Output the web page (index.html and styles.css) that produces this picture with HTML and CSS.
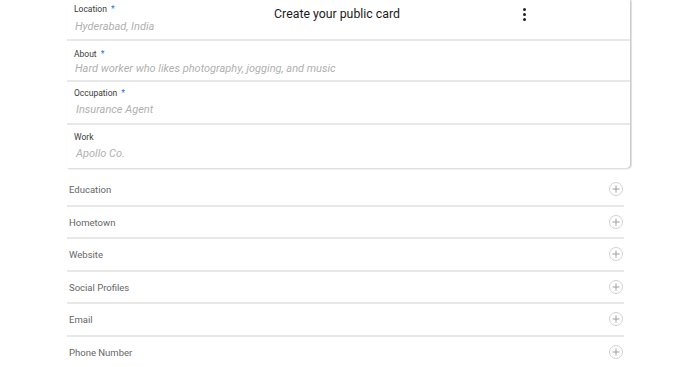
FILE: index.html
```html
<!DOCTYPE html>
<html>
<head>
<meta charset="utf-8">
<link rel="stylesheet" href="styles.css">
</head>
<body>
<div class="page">
  <div class="header">
    <span class="title">Create your public card</span>
    <span class="kebab"><i></i><i></i><i></i></span>
  </div>
  <div class="card">
    <div class="field f1">
      <div class="label">Location <span class="req">*</span></div>
      <div class="value">Hyderabad, India</div>
    </div>
    <div class="field f2">
      <div class="label">About <span class="req">*</span></div>
      <div class="value">Hard worker who likes photography, jogging, and music</div>
    </div>
    <div class="field f3">
      <div class="label">Occupation <span class="req">*</span></div>
      <div class="value">Insurance Agent</div>
    </div>
    <div class="field f4">
      <div class="label">Work</div>
      <div class="value">Apollo Co.</div>
    </div>
  </div>
  <div class="list">
    <div class="row"><span>Education</span><span class="plus"></span></div>
    <div class="row"><span>Hometown</span><span class="plus"></span></div>
    <div class="row"><span>Website</span><span class="plus"></span></div>
    <div class="row"><span>Social Profiles</span><span class="plus"></span></div>
    <div class="row"><span>Email</span><span class="plus"></span></div>
    <div class="row"><span>Phone Number</span><span class="plus"></span></div>
  </div>
</div>
</body>
</html>
```
FILE: styles.css
```css
html, body {
  margin: 0;
  padding: 0;
  background: #fff;
  font-family: Roboto, "Liberation Sans", sans-serif;
  overflow: hidden;
}
.page {
  position: relative;
  width: 699px;
  height: 367px;
  padding-left: 67px;
  box-sizing: border-box;
}
.header {
  position: absolute;
  top: 0;
  left: 0;
  width: 699px;
  height: 28px;
  display: flex;
  align-items: center;
  justify-content: center;
}
.title {
  font-size: 12.3px;
  color: #1a1a1a;
  margin-left: -25px;
}
.kebab {
  position: absolute;
  left: 523px;
  top: 8px;
  display: flex;
  flex-direction: column;
  gap: 2px;
}
.kebab i {
  display: block;
  width: 3px;
  height: 3px;
  border-radius: 50%;
  background: #222;
}
.card {
  width: 563px;
  background: #fff;
  border-radius: 0 0 4px 0;
  box-shadow: 1px 1px 2px rgba(0,0,0,0.18), 2px 0 0 #ececec;
}
.field {
  box-sizing: border-box;
  padding-left: 7px;
  border-bottom: 2px solid #e8e8e8;
}
.field:last-child { border-bottom: none; }
.f1 { height: 41px; padding-top: 3px; }
.f2 { height: 41px; padding-top: 6px; }
.f3 { height: 43px; padding-top: 5px; }
.f4 { height: 43px; padding-top: 6px; }
.label {
  font-size: 8.5px;
  color: #3a3a3a;
  line-height: 12px;
}
.f2 .label { margin-top: 1px; }
.req {
  color: #1a73e8;
  margin-left: 2px;
}
.value {
  font-style: italic;
  font-size: 11px;
  color: #b0b0b0;
  margin-top: 4px;
  margin-left: 1px;
  line-height: 15px;
}
.f2 .value { margin-top: 1px; }
.f3 .value, .f4 .value { margin-top: 3px; margin-left: 2px; }
.list {
  width: 557px;
  margin-top: 6px;
}
.row {
  box-sizing: border-box;
  height: 32.5px;
  display: flex;
  align-items: center;
  justify-content: space-between;
  padding-left: 2px;
  font-size: 9.5px;
  color: #666;
  border-bottom: 2px solid #e8e8e8;
}
.row span:first-child { margin-top: 1px; }
.plus {
  position: relative;
  width: 14px;
  height: 14px;
  box-sizing: border-box;
  border: 1px solid #d2d2d2;
  border-radius: 50%;
  margin-right: 1px;
}
.plus::before, .plus::after {
  content: "";
  position: absolute;
  background: #a0a0a0;
  left: 50%;
  top: 50%;
  transform: translate(-50%, -50%);
}
.plus::before { width: 7px; height: 1px; }
.plus::after { width: 1px; height: 7px; }
```
